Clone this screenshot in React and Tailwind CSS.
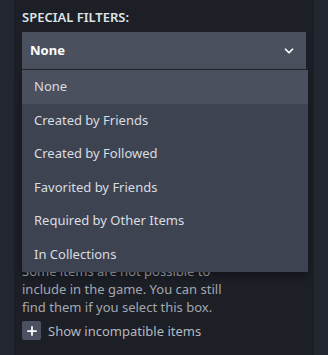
import { ChevronDown, Plus } from 'lucide-react';

const options = [
  'None',
  'Created by Friends',
  'Created by Followed',
  'Favorited by Friends',
  'Required by Other Items',
  'In Collections'
];

function App() {
  return (
    <main
      className="flex h-[355px] w-[328px] bg-[#22262e] px-[14px]"
      style={{ fontFamily: '"Noto Sans", Arial, sans-serif' }}
    >
      <section className="relative flex w-full flex-col bg-[#1c1f26] px-[8px] pt-[9px]">
        <h3 className="text-[13px] font-semibold uppercase leading-[16px] text-[#dfe3e6]">Special Filters:</h3>

        <button className="mt-[7px] flex h-[37px] w-full items-center justify-between bg-[#4a505d] pl-[8px] pr-[10px] text-[13px] font-bold text-white">
          None
          <ChevronDown size={14} strokeWidth={3} className="text-white" />
        </button>

        <div className="mt-[193px] flex flex-col text-[13px] leading-[18px] text-[#a3a8b0]">
          <p className="w-[212px]">
            Some items are not possible to include in the game. You can still find them if you select this box.
          </p>
          <label className="mt-[5px] flex items-center gap-[7px] text-[13px] text-[#b4b9c0]">
            <span className="flex h-[19px] w-[19px] items-center justify-center rounded-[2px] bg-[#4b5160]">
              <Plus size={14} strokeWidth={3} className="text-white" />
            </span>
            Show incompatible items
          </label>
        </div>

        <ul className="absolute left-[8px] top-[70px] w-[286px] bg-[#3d4350] shadow-[0_-1px_0_#20232a,0_4px_8px_rgba(0,0,0,0.35)]">
          {options.map((opt, i) => (
            <li
              key={opt}
              className={`flex h-[33.6px] items-center px-[12px] text-[13px] text-[#dadde2] ${
                i === 0 ? 'bg-[#4a505e]' : ''
              }`}
            >
              {opt}
            </li>
          ))}
        </ul>
      </section>
    </main>
  );
}

export default App;
